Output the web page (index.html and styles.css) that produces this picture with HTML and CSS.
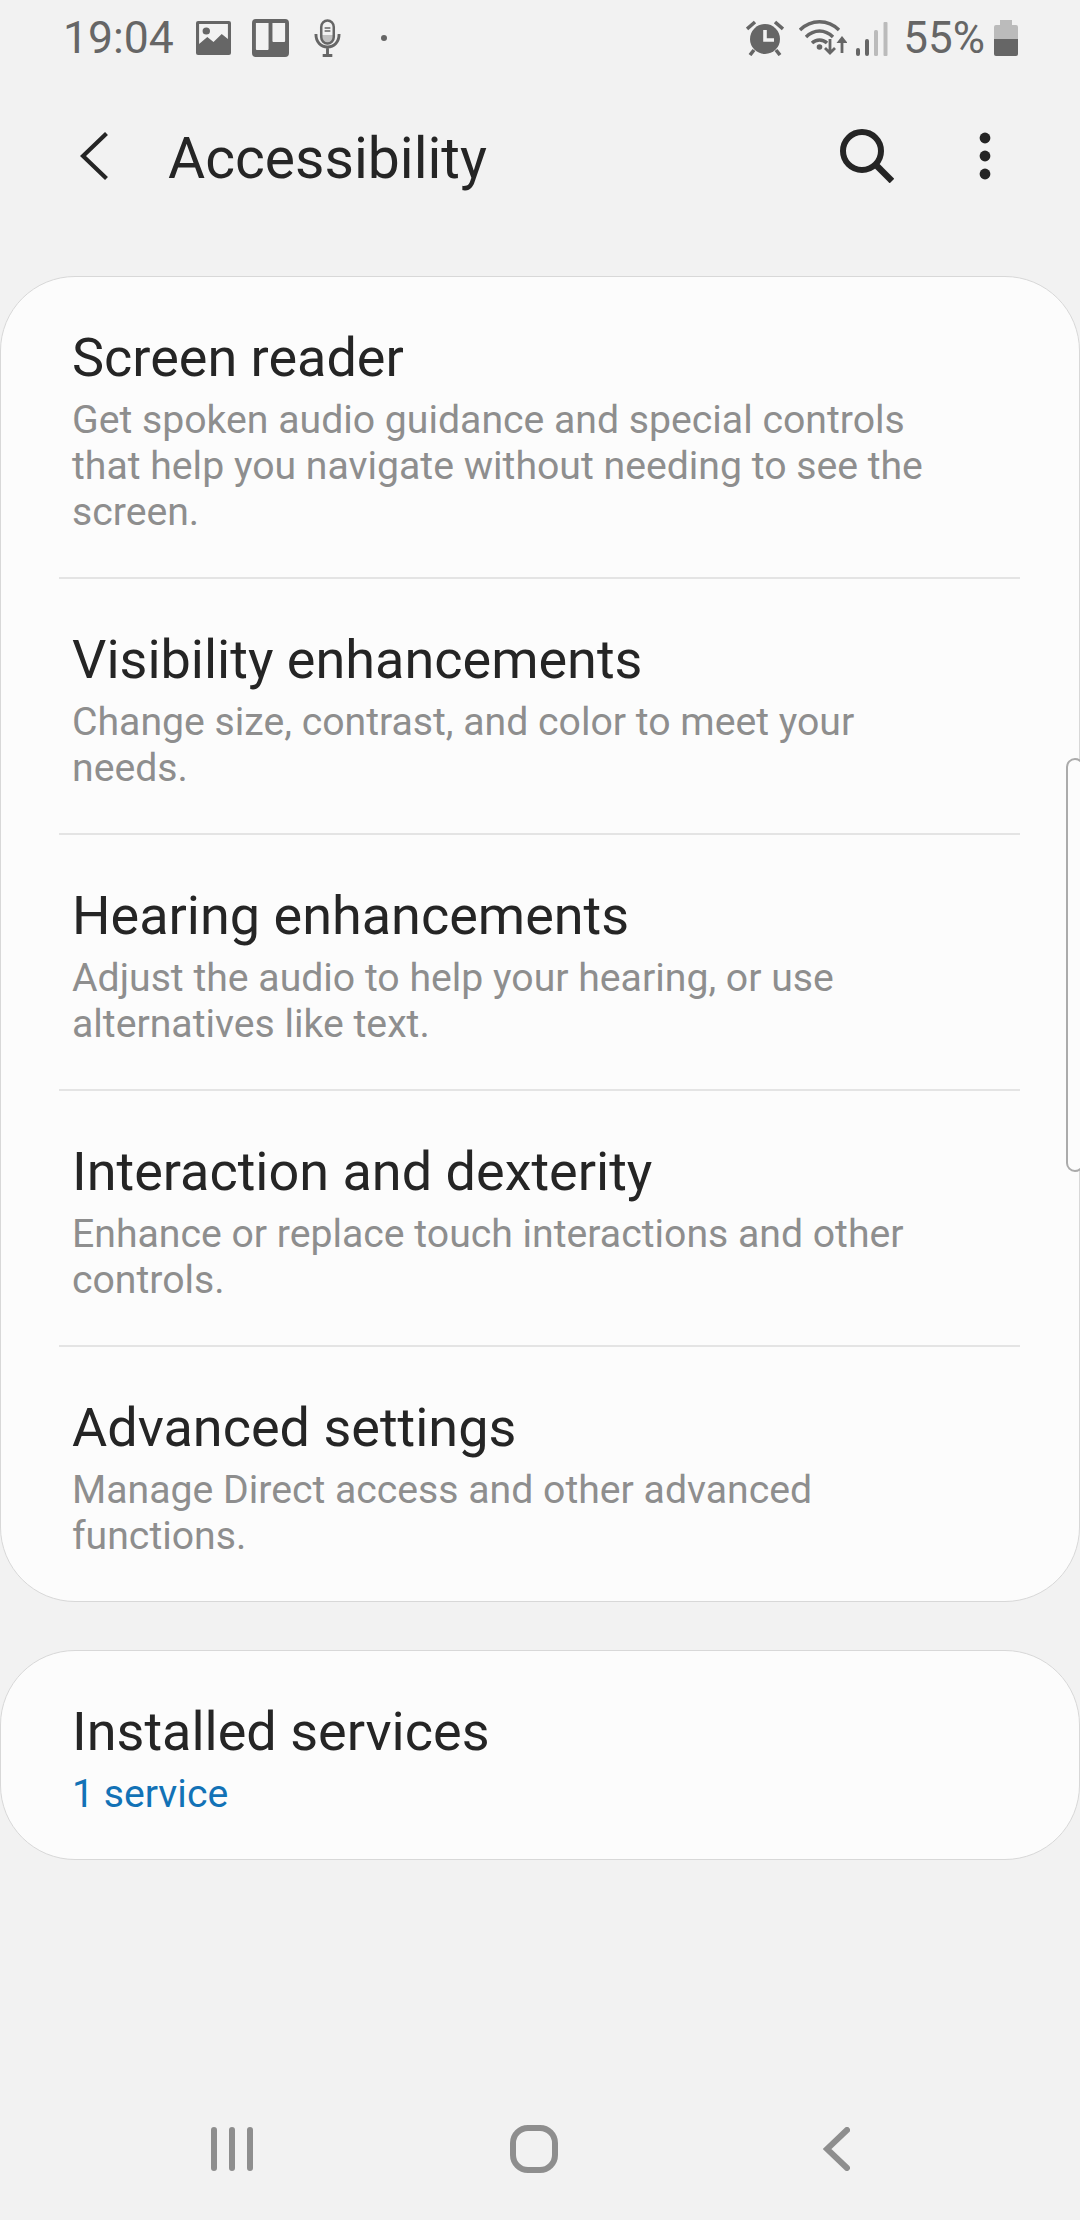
FILE: index.html
```html
<!DOCTYPE html>
<html lang="en">
<head>
<meta charset="utf-8">
<title>Accessibility</title>
<link rel="stylesheet" href="styles.css">
</head>
<body>
<div class="page">
  <header class="status">
    <span class="time">19:04</span>
    <svg class="ic-image" width="35" height="34" viewBox="0 0 34 34" preserveAspectRatio="none"><path fill="#666" fill-rule="evenodd" d="M2 0h30a2 2 0 0 1 2 2v30a2 2 0 0 1-2 2H2a2 2 0 0 1-2-2V2a2 2 0 0 1 2-2zM3 3v20l8-7 6 5 8-8 6 5V3z"/><circle cx="10" cy="10" r="3.6" fill="#666"/></svg>
    <svg class="ic-board" width="37" height="38" viewBox="0 0 38 38" preserveAspectRatio="none"><path fill="#666" fill-rule="evenodd" d="M4 0h30a4 4 0 0 1 4 4v30a4 4 0 0 1-4 4H4a4 4 0 0 1-4-4V4a4 4 0 0 1 4-4zM4 4v26a1 1 0 0 0 1 1h11a1 1 0 0 0 1-1V4zM21 4v18a1 1 0 0 0 1 1h11a1 1 0 0 0 1-1V4z"/></svg>
    <svg class="ic-mic" width="27" height="38" viewBox="0 0 28 38" preserveAspectRatio="none"><path fill="none" stroke="#666" stroke-width="2.6" d="M7.500 8a6.500 6.500 0 0 1 13 0v10a6.500 6.500 0 0 1-13 0z"/><path fill="#666" d="M7.500 16h13v3a6.500 6.500 0 0 1-13 0z" opacity=".35"/><path fill="none" stroke="#666" stroke-width="1.500" d="M11 9h6M11 12h6"/><path fill="none" stroke="#666" stroke-width="3" d="M2 15c0 8 5 13 12 13s12-5 12-13M14 28v7"/><path stroke="#666" stroke-width="3" d="M9 36.500h10"/></svg>
    <span class="dot"></span>
    <span class="spacer"></span>
    <svg class="ic-alarm" width="38" height="36" viewBox="0 0 38 36"><circle cx="19" cy="19" r="15" fill="#666"/><path fill="none" stroke="#666" stroke-width="3.600" d="M1 9l8-7M37 9l-8-7M8 30l-4 5M30 30l4 5"/><path fill="none" stroke="#f2f2f2" stroke-width="3.600" d="M19 10v10h9"/></svg>
    <svg class="ic-wifi" width="48" height="36" viewBox="0 0 48 36"><g fill="none" stroke="#666" stroke-width="3.400"><path d="M1 10C12-1 29-1 40 10M7 17c8-8 19-8 27 0M13 23c4-4 11-4 15 0"/></g><circle cx="20.500" cy="27" r="2.800" fill="#666"/><path fill="none" stroke="#666" stroke-width="2.800" d="M31 19v14M26 28l5 5 5-5M43 22v11"/><path fill="#666" d="M43 16l5.500 7h-11z"/></svg>
    <svg class="ic-signal" width="32" height="34" viewBox="0 0 32 34"><rect x="0" y="26" width="4" height="8" rx="2" fill="#666"/><rect x="9" y="17" width="4" height="17" rx="2" fill="#666"/><rect x="18" y="8" width="4" height="26" rx="1.500" fill="#bbb"/><rect x="27.500" y="0" width="4" height="34" rx="1" fill="#bbb"/></svg>
    <span class="pct">55%</span>
    <svg class="ic-battery" width="24" height="36" viewBox="0 0 24 36"><path fill="#bbb" d="M6 0h12v5h4a2 2 0 0 1 2 2v12H0V7a2 2 0 0 1 2-2h4z"/><path fill="#666" d="M0 19h24v15a2 2 0 0 1-2 2H2a2 2 0 0 1-2-2z"/></svg>
  </header>

  <nav class="toolbar">
    <svg class="tb-back" width="28" height="48" viewBox="0 0 28 48"><path fill="none" stroke="#252525" stroke-width="4.200" d="M26.500 1.500L3 24l23.500 22.500"/></svg>
    <h1 class="tb-title">Accessibility</h1>
    <svg class="tb-search" width="54" height="54" viewBox="0 0 54 54"><circle cx="22" cy="22" r="19" fill="none" stroke="#252525" stroke-width="6"/><path fill="none" stroke="#252525" stroke-width="6.500" d="M35 35l17 17"/></svg>
    <svg class="tb-more" width="12" height="48" viewBox="0 0 12 48"><circle cx="6" cy="6" r="5.400" fill="#252525"/><circle cx="6" cy="24" r="5.400" fill="#252525"/><circle cx="6" cy="42" r="5.400" fill="#252525"/></svg>
  </nav>

  <main class="content">
    <section class="card">
      <div class="row">
        <div class="row-title">Screen reader</div>
        <div class="row-sub">Get spoken audio guidance and special controls that help you navigate without needing to see the screen.</div>
      </div>
      <div class="row">
        <div class="row-title">Visibility enhancements</div>
        <div class="row-sub">Change size, contrast, and color to meet your needs.</div>
      </div>
      <div class="row">
        <div class="row-title">Hearing enhancements</div>
        <div class="row-sub">Adjust the audio to help your hearing, or use alternatives like text.</div>
      </div>
      <div class="row">
        <div class="row-title">Interaction and dexterity</div>
        <div class="row-sub">Enhance or replace touch interactions and other controls.</div>
      </div>
      <div class="row">
        <div class="row-title">Advanced settings</div>
        <div class="row-sub">Manage Direct access and other advanced functions.</div>
      </div>
    </section>
    <section class="card">
      <div class="row">
        <div class="row-title">Installed services</div>
        <div class="row-sub row-link">1 service</div>
      </div>
    </section>
  </main>

  <div class="edge-handle"></div>

  <footer class="navbar">
    <svg class="nav-recent" width="42" height="44" viewBox="0 0 42 44"><g fill="none" stroke="#8e8e8e" stroke-width="6" stroke-linecap="round"><path d="M3 3v38M21 3v38M39 3v38"/></g></svg>
    <svg class="nav-home" width="48" height="48" viewBox="0 0 48 48"><rect x="3" y="3" width="42" height="42" rx="15" fill="none" stroke="#8e8e8e" stroke-width="6"/></svg>
    <svg class="nav-back" width="27" height="44" viewBox="0 0 27 44"><path fill="none" stroke="#8e8e8e" stroke-width="6" stroke-linecap="round" stroke-linejoin="miter" d="M24 3L4 22l20 19"/></svg>
  </footer>
</div>
</body>
</html>
```
FILE: styles.css
```css
* { box-sizing: border-box; }
html, body { margin: 0; padding: 0; }
body { background: #f2f2f2; font-family: Roboto, "Noto Sans", sans-serif; }
.page {
  position: relative;
  width: 1080px;
  height: 2220px;
  display: flex;
  flex-direction: column;
  overflow: hidden;
  background: #f2f2f2;
}
.status {
  display: flex;
  align-items: center;
  height: 76px;
  padding: 0 62px 0 63px;
  color: #666;
  flex: none;
}
.time { font-size: 44.5px; line-height: 76px; width: 133px; }
.ic-board { margin-left: 21px; }
.ic-mic { margin-left: 25px; }
.dot { width: 6px; height: 6px; border-radius: 50%; background: #666; margin-left: 40px; }
.spacer { flex: 1; }
.ic-wifi { margin-left: 15px; }
.ic-signal { margin-left: 9px; margin-top: 1px; }
.pct { font-size: 44px; line-height: 76px; margin-left: 15px; }
.ic-battery { margin-left: 9px; }
.toolbar {
  display: flex;
  align-items: center;
  height: 160px;
  padding: 0 89px 0 80px;
  flex: none;
}
.tb-back { flex: none; }
.tb-title { margin: 5px 0 0 60px; font-size: 57px; font-weight: 400; color: #252525; flex: 1; line-height: 70px; }
.tb-search { margin-right: 85px; }
.content {
  display: flex;
  flex-direction: column;
  gap: 48px;
  margin-top: 40px;
  flex: none;
}
.card {
  background: #fcfcfc;
  border: 1px solid #d8d8d8;
  border-radius: 75px;
  padding: 0 59px 0 58px;
}
.row {
  padding: 51px 70px 42px 13px;
  border-bottom: 2px solid #e4e4e4;
}
.row:last-child { border-bottom: 0; }
.row-title { font-size: 54px; line-height: 60px; color: #252525; }
.row-sub { font-size: 39.2px; line-height: 46px; color: #8e8e8e; margin-top: 9px; }
.row-link { color: #1272b6; }
.edge-handle {
  position: absolute;
  right: -4px;
  top: 758px;
  width: 18px;
  height: 414px;
  background: #fcfcfc;
  border: 2px solid #ababab;
  border-radius: 14px;
}
.navbar {
  margin-top: auto;
  height: 142px;
  display: flex;
  align-items: center;
  flex: none;
  padding-left: 211px;
}
.nav-home { margin-left: 257px; }
.nav-back { margin-left: 265px; }
```
